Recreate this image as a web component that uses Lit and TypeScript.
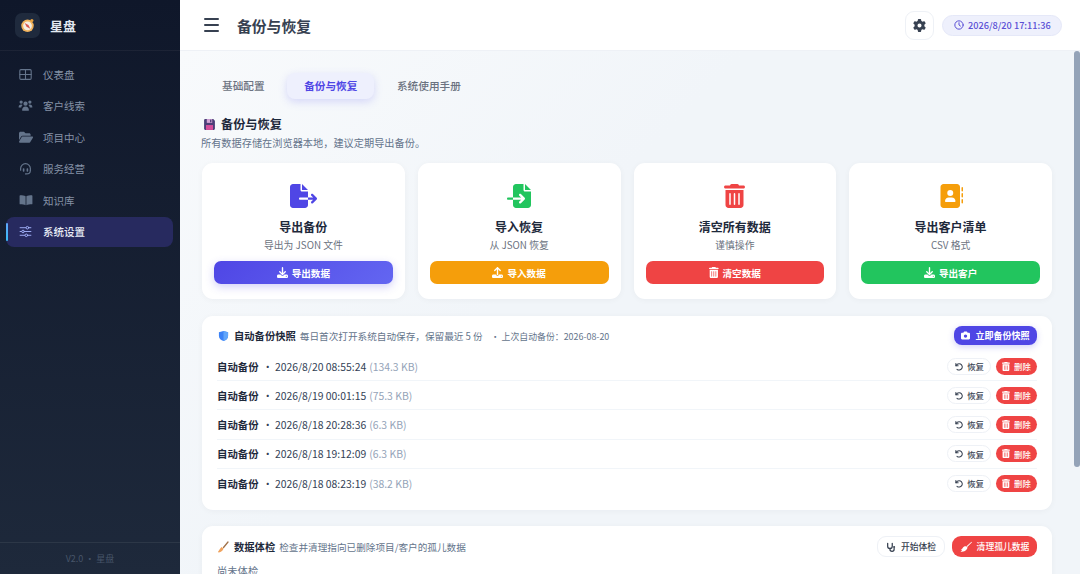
import { LitElement, html, css, svg } from "lit";
import { customElement } from "lit/decorators.js";

const P = {
  fileExport: [576, "M0 64C0 28.7 28.7 0 64 0H224V128c0 17.7 14.3 32 32 32H384V288H216c-13.3 0-24 10.7-24 24s10.7 24 24 24H384V448c0 35.3-28.7 64-64 64H64c-35.3 0-64-28.7-64-64V64zM384 336V288H494.1l-39-39c-9.4-9.4-9.4-24.6 0-33.9s24.6-9.4 33.9 0l80 80c9.4 9.4 9.4 24.6 0 33.9l-80 80c-9.4 9.4-24.6 9.4-33.9 0s-9.4-24.6 0-33.9l39-39H384zm0-208H256V0L384 128z"],
  fileImport: [512, "M128 64c0-35.3 28.7-64 64-64H352V128c0 17.7 14.3 32 32 32H512V448c0 35.3-28.7 64-64 64H192c-35.3 0-64-28.7-64-64V336H302.1l-39 39c-9.4 9.4-9.4 24.6 0 33.9s24.6 9.4 33.9 0l80-80c9.4-9.4 9.4-24.6 0-33.9l-80-80c-9.4-9.4-24.6-9.4-33.9 0s-9.4 24.6 0 33.9l39 39H128V64zm0 224v48H24c-13.3 0-24-10.7-24-24s10.7-24 24-24H128zM512 128H384V0L512 128z"],
  trash: [448, "M135.2 17.7C140.6 6.8 151.7 0 163.8 0H284.2c12.1 0 23.2 6.8 28.6 17.7L320 32h96c17.7 0 32 14.3 32 32s-14.3 32-32 32H32C14.3 96 0 81.7 0 64S14.3 32 32 32h96l7.2-14.3zM32 128H416V448c0 35.3-28.7 64-64 64H96c-35.3 0-64-28.7-64-64V128zm96 64c-8.8 0-16 7.2-16 16V432c0 8.8 7.2 16 16 16s16-7.2 16-16V208c0-8.8-7.2-16-16-16zm96 0c-8.8 0-16 7.2-16 16V432c0 8.8 7.2 16 16 16s16-7.2 16-16V208c0-8.8-7.2-16-16-16zm96 0c-8.8 0-16 7.2-16 16V432c0 8.8 7.2 16 16 16s16-7.2 16-16V208c0-8.8-7.2-16-16-16z"],
  book: [512, "M96 0C60.7 0 32 28.7 32 64V448c0 35.3 28.7 64 64 64H384c35.3 0 64-28.7 64-64V64c0-35.3-28.7-64-64-64H96zM208 288h64c44.2 0 80 35.8 80 80c0 8.8-7.2 16-16 16H144c-8.8 0-16-7.2-16-16c0-44.2 35.8-80 80-80zm-32-96a64 64 0 1 1 128 0 64 64 0 1 1 -128 0zM512 80c0-8.8-7.2-16-16-16s-16 7.2-16 16v64c0 8.8 7.2 16 16 16s16-7.2 16-16V80zM496 192c-8.8 0-16 7.2-16 16v64c0 8.8 7.2 16 16 16s16-7.2 16-16V208c0-8.8-7.2-16-16-16zm16 144c0-8.8-7.2-16-16-16s-16 7.2-16 16v64c0 8.8 7.2 16 16 16s16-7.2 16-16V336z"],
  download: [512, "M288 32c0-17.7-14.3-32-32-32s-32 14.3-32 32V274.7l-73.4-73.4c-12.5-12.5-32.8-12.5-45.3 0s-12.5 32.8 0 45.3l128 128c12.5 12.5 32.8 12.5 45.3 0l128-128c12.5-12.5 12.5-32.8 0-45.3s-32.8-12.5-45.3 0L288 274.7V32zM64 352c-35.3 0-64 28.7-64 64v32c0 35.3 28.7 64 64 64H448c35.3 0 64-28.7 64-64V416c0-35.3-28.7-64-64-64H346.5l-45.3 45.3c-25 25-65.5 25-90.5 0L165.5 352H64zm368 56a24 24 0 1 1 0 48 24 24 0 1 1 0-48z"],
  upload: [512, "M288 109.3V352c0 17.7-14.3 32-32 32s-32-14.3-32-32V109.3l-73.4 73.4c-12.5 12.5-32.8 12.5-45.3 0s-12.5-32.8 0-45.3l128-128c12.5-12.5 32.8-12.5 45.3 0l128 128c12.5 12.5 12.5 32.8 0 45.3s-32.8 12.5-45.3 0L288 109.3zM64 352H192c0 35.3 28.7 64 64 64s64-28.7 64-64H448c35.3 0 64 28.7 64 64v32c0 35.3-28.7 64-64 64H64c-35.3 0-64-28.7-64-64V416c0-35.3 28.7-64 64-64zM432 456a24 24 0 1 0 0-48 24 24 0 1 0 0 48z"],
  gear: [512, "M495.9 166.6c3.2 8.7 .5 18.4-6.4 24.6l-43.3 39.4c1.1 8.3 1.7 16.8 1.7 25.4s-.6 17.1-1.7 25.4l43.3 39.4c6.9 6.2 9.6 15.9 6.4 24.6c-4.4 11.9-9.7 23.3-15.8 34.3l-4.7 8.1c-6.6 11-14 21.4-22.1 31.2c-5.9 7.2-15.7 9.6-24.5 6.8l-55.7-17.7c-13.4 10.3-28.2 18.9-44 25.4l-12.5 57.1c-2 9.1-9 16.3-18.2 17.8c-13.8 2.3-28 3.5-42.5 3.5s-28.7-1.2-42.5-3.5c-9.2-1.5-16.2-8.7-18.2-17.8l-12.5-57.1c-15.8-6.5-30.6-15.1-44-25.4L83.1 425.9c-8.8 2.8-18.6 .3-24.5-6.8c-8.1-9.8-15.5-20.2-22.1-31.2l-4.7-8.1c-6.1-11-11.4-22.4-15.8-34.3c-3.2-8.7-.5-18.4 6.4-24.6l43.3-39.4C64.6 273.1 64 264.6 64 256s.6-17.1 1.7-25.4L22.4 191.2c-6.9-6.2-9.6-15.9-6.4-24.6c4.4-11.9 9.7-23.3 15.8-34.3l4.7-8.1c6.6-11 14-21.4 22.1-31.2c5.9-7.2 15.7-9.6 24.5-6.8l55.7 17.7c13.4-10.3 28.2-18.9 44-25.4l12.5-57.1c2-9.1 9-16.3 18.2-17.8C227.3 1.2 241.5 0 256 0s28.7 1.2 42.5 3.5c9.2 1.5 16.2 8.7 18.2 17.8l12.5 57.1c15.8 6.5 30.6 15.1 44 25.4l55.7-17.7c8.8-2.8 18.6-.3 24.5 6.8c8.1 9.8 15.5 20.2 22.1 31.2l4.7 8.1c6.1 11 11.4 22.4 15.8 34.3zM256 336a80 80 0 1 0 0-160 80 80 0 1 0 0 160z"],
  camera: [512, "M149.1 64.8L138.7 96H64C28.7 96 0 124.7 0 160V416c0 35.3 28.7 64 64 64H448c35.3 0 64-28.7 64-64V160c0-35.3-28.7-64-64-64H373.3L362.9 64.8C356.4 45.2 338.1 32 317.4 32H194.6c-20.7 0-39 13.2-45.5 32.8zM256 192a96 96 0 1 1 0 192 96 96 0 1 1 0-192z"],
} as const;

const fa = (k: keyof typeof P, size: number) => {
  const [w, d] = P[k];
  return html`<svg class="fa" viewBox="0 0 ${w} 512" height=${size} width=${(size * w) / 512} fill="currentColor"><path d=${d}></path></svg>`;
};

const line = (size: number, body: unknown, vb = 24) =>
  html`<svg viewBox="0 0 ${vb} ${vb}" width=${size} height=${size} fill="none" stroke="currentColor" stroke-linecap="round" stroke-linejoin="round">${body}</svg>`;

const navIcons: Record<string, unknown> = {
  grid: line(13, svg`<rect x="1.500" y="3" width="21" height="18" rx="2" stroke-width="2"/><path d="M12 3v18M1.500 12h21" stroke-width="2"/>`),
  users: html`<svg viewBox="0 0 24 24" width="15" height="15" fill="currentColor"><circle cx="5" cy="6.500" r="2.600"/><circle cx="19" cy="6.500" r="2.600"/><circle cx="12" cy="9" r="3.400"/><path d="M1 15c0-3 1.600-4.500 4-4.500 1 0 1.800.3 2.400.8-1.300 1-2 2.300-2.200 3.700H1.800a.8.8 0 0 1-.8 0zM23 15c0-3-1.600-4.500-4-4.500-1 0-1.800.3-2.400.8 1.300 1 2 2.300 2.200 3.700h3.400a.8.800 0 0 0 .8 0zM6.500 19.500c0-3.500 2.300-6 5.500-6s5.500 2.500 5.500 6c0 .5-.4.800-.8.800H7.300c-.4 0-.8-.3-.8-.8z"/></svg>`,
  folder: html`<svg viewBox="0 0 576 512" width="14" height="12.500" fill="currentColor"><path d="M88.700 223.800L0 375.800V96C0 60.700 28.700 32 64 32H181.500c17 0 33.300 6.700 45.300 18.700l26.500 26.500c12 12 28.300 18.700 45.300 18.700H416c35.300 0 64 28.700 64 64v32H144c-22.800 0-43.800 12.100-55.300 31.800zm27.600 16.100C122.100 230 132.600 224 144 224H544c11.500 0 22 6.100 27.700 16.100s5.700 22.200-.1 32.100l-112 192C453.900 474 443.400 480 432 480H32c-11.500 0-22-6.100-27.700-16.100s-5.700-22.200 .1-32.100l112-192z"/></svg>`,
  headset: line(13, svg`<path d="M3 15v-3a9 9 0 0 1 18 0v3" stroke-width="2.200"/><rect x="7" y="11.500" width="3" height="6.500" rx="1.200" fill="currentColor" stroke="none"/><rect x="14" y="11.500" width="3" height="6.500" rx="1.200" fill="currentColor" stroke="none"/><path d="M21 15c0 4-2.500 7-7 7h-2" stroke-width="2.200"/>`),
  book: html`<svg viewBox="0 0 24 24" width="14" height="14" fill="currentColor"><path d="M1 5c0-.6.4-1 1-1 4 0 7 .4 9.300 1.500V21c-2.300-1.100-5.300-1.600-9.300-1.600-.6 0-1-.4-1-1zM23 5c0-.6-.4-1-1-1-4 0-7 .4-9.300 1.500V21c2.300-1.100 5.300-1.600 9.300-1.600.6 0 1-.4 1-1z"/></svg>`,
  sliders: line(13, svg`<path d="M2 5h20M2 12h20M2 19h20" stroke-width="1.700"/><circle cx="15.500" cy="5" r="2.400" fill="#272a5f" stroke-width="1.700"/><circle cx="7.500" cy="12" r="2.400" fill="#272a5f" stroke-width="1.700"/><circle cx="13.500" cy="19" r="2.400" fill="#272a5f" stroke-width="1.700"/>`),
};

const undo = line(9, svg`<path d="M5 4v6h6" stroke-width="2.800"/><path d="M5.500 10A8.500 8.500 0 1 1 8 19.500" stroke-width="2.800"/>`);
const clock = line(10, svg`<circle cx="12" cy="12" r="10" stroke-width="2.400"/><path d="M12 6.500V12l3.500 2.500" stroke-width="2.400"/>`);
const stetho = line(10, svg`<path d="M4 3v7a5.500 5.500 0 0 0 11 0V3" stroke-width="3"/><path d="M9.500 16v1.500a5 5 0 0 0 10 0V15" stroke-width="3"/><circle cx="19.500" cy="12" r="2.500" fill="currentColor" stroke="none"/>`);
const broomWhite = html`<svg viewBox="0 0 24 24" width="12" height="12" fill="currentColor"><path d="M23 1.500l1 1-9.500 9.500-1.500-1.500z"/><path d="M12.500 10.500l2.500 2.500c-.5 2.500-2 5-4.500 6.500-2 1.200-5.500 2-9.500 2 1.500-1 3-2.500 3.500-4-1 .5-2 .5-3 .3 2-1 3.500-3 4.500-4.800 1.500-2 4-3 6.500-2.500z"/></svg>`;

const cards = [
  { icon: "fileExport", ic: "#4f46e5", t: "导出备份", s: "导出为 JSON 文件", b: "导出数据", bi: "download", cls: "indigo" },
  { icon: "fileImport", ic: "#22c55e", t: "导入恢复", s: "从 JSON 恢复", b: "导入数据", bi: "upload", cls: "amber" },
  { icon: "trash", ic: "#ef4444", t: "清空所有数据", s: "谨慎操作", b: "清空数据", bi: "trash", cls: "red" },
  { icon: "book", ic: "#f59e0b", t: "导出客户清单", s: "CSV 格式", b: "导出客户", bi: "download", cls: "green" },
] as const;

const nav = [
  ["grid", "仪表盘"],
  ["users", "客户线索"],
  ["folder", "项目中心"],
  ["headset", "服务经营"],
  ["book", "知识库"],
  ["sliders", "系统设置"],
];

const rows = [
  ["2026/8/20 08:55:24", "(134.3 KB)"],
  ["2026/8/19 00:01:15", "(75.3 KB)"],
  ["2026/8/18 20:28:36", "(6.3 KB)"],
  ["2026/8/18 19:12:09", "(6.3 KB)"],
  ["2026/8/18 08:23:19", "(38.2 KB)"],
];

@customElement("app-root")
export class AppRoot extends LitElement {
  static styles = css`
    :host {
      display: flex;
      width: 1080px;
      height: 574px;
      overflow: hidden;
      font-family: "Noto Sans CJK SC", "Noto Sans", sans-serif;
      color: #1e293b;
      background: #f1f5f9;
    }
    svg { display: block; flex: none; }
    .side {
      width: 180px;
      flex: none;
      display: flex;
      flex-direction: column;
      background: linear-gradient(180deg, #0f172a 0%, #1e293b 100%);
    }
    .brand {
      height: 50px;
      flex: none;
      display: flex;
      align-items: center;
      gap: 10px;
      padding-left: 15px;
      border-bottom: 1px solid rgba(255, 255, 255, 0.05);
    }
    .logo {
      width: 25px;
      height: 25px;
      border-radius: 7px;
      background: #1f2a3d;
      display: flex;
      align-items: center;
      justify-content: center;
    }
    .brand b { font-size: 13px; font-weight: 600; color: #e2e8f0; }
    .nav { flex: 1; padding: 8px 7px 0 6px; display: flex; flex-direction: column; gap: 1.6px; }
    .item {
      position: relative;
      height: 30px;
      display: flex;
      align-items: center;
      border-radius: 8px;
      font-size: 10.5px;
      color: #8592a6;
    }
    .ni { width: 15px; margin: 0 10px 0 12px; display: flex; justify-content: center; color: #64748b; }
    .item.on { background: #272a5f; color: #e8ecf6; font-weight: 500; }
    .item.on .ni { color: #a5b4fc; }
    .item.on::before {
      content: "";
      position: absolute;
      left: 0;
      top: 6px;
      bottom: 6px;
      width: 2px;
      border-radius: 2px;
      background: linear-gradient(180deg, #60a5fa, #38bdf8);
    }
    .foot {
      height: 31px;
      border-top: 1px solid rgba(255, 255, 255, 0.07);
      display: flex;
      align-items: center;
      justify-content: center;
      font-size: 9px;
      color: #475569;
    }
    .right { flex: 1; min-width: 0; display: flex; flex-direction: column; }
    .top {
      height: 50px;
      flex: none;
      background: #fff;
      border-bottom: 1px solid #eef1f6;
      display: flex;
      align-items: center;
      padding: 0 18px 0 24px;
    }
    .bars { width: 15px; height: 14px; display: flex; flex-direction: column; justify-content: space-between; margin-right: 18px; }
    .bars i { display: block; height: 2.2px; border-radius: 1px; background: #374151; }
    .top h1 { margin: 0; font-size: 14.8px; font-weight: 600; color: #374151; flex: 1; }
    .gear {
      width: 29px;
      height: 29px;
      box-sizing: border-box;
      border: 1px solid #eef1f6;
      border-radius: 9px;
      display: flex;
      align-items: center;
      justify-content: center;
      color: #374151;
      margin-right: 8px;
    }
    .time {
      height: 21px;
      width: 120px;
      box-sizing: border-box;
      border: 1px solid #e5e8f8;
      border-radius: 11px;
      background: #eef0fc;
      color: #5b50d6;
      font-size: 9.2px;
      font-weight: 500;
      display: flex;
      align-items: center;
      gap: 4px;
      padding-left: 11px;
    }
    .body { flex: 1; min-height: 0; display: flex; background: #f1f5f9; }
    .scroll { flex: 1; min-width: 0; overflow: hidden; background: linear-gradient(135deg, #f8fafc, #f1f5f9 40%); }
    .track { width: 6px; flex: none; }
    .thumb { height: 416px; background: #94a3b8; border-radius: 3px; }
    .inner { box-sizing: border-box; height: 660px; padding: 22px 22px 0 22px; }
    .tabs { display: flex; gap: 5.500px; padding-left: 3px; height: 26px; }
    .tab {
      padding: 0 17px 1px;
      display: flex;
      align-items: center;
      border-radius: 8px;
      font-size: 10.67px;
      font-weight: 500;
      color: #6b7280;
    }
    .tab.on { background: #eef0fd; color: #4f46e5; font-weight: 600; box-shadow: 0 3px 8px rgba(99, 102, 241, 0.22); }
    .sect { margin-top: 16px; display: flex; align-items: center; gap: 5px; height: 18px; font-size: 12.2px; font-weight: 700; color: #1e293b; }
    .desc { margin-top: 2px; font-size: 10.2px; line-height: 16px; color: #64748b; margin-left: -1px; }
    .cards { margin-top: 12px; display: grid; grid-template-columns: repeat(4, 1fr); gap: 13px; }
    .card {
      background: #fff;
      border-radius: 11px;
      box-shadow: 0 1px 6px rgba(15, 23, 42, 0.04);
      padding: 21px 12px 15px;
      display: flex;
      flex-direction: column;
      align-items: center;
      height: 136px;
      box-sizing: border-box;
    }
    .card .ic { height: 24px; display: flex; align-items: center; }
    .card h3 { margin: 10px 0 0; font-size: 12px; line-height: 18px; font-weight: 700; color: #1e293b; }
    .card p { margin: 2px 0 0; font-size: 9.800px; line-height: 15px; color: #6b7280; }
    .btn {
      margin-top: 8px;
      width: 100%;
      height: 23px;
      border-radius: 7px;
      display: flex;
      align-items: center;
      justify-content: center;
      gap: 4px;
      color: #fff;
      font-size: 9.6px;
      font-weight: 600;
    }
    .indigo { background: linear-gradient(135deg, #4f46e5, #6366f1); box-shadow: 0 3px 8px rgba(79, 70, 229, 0.25); }
    .amber { background: #f59e0b; }
    .red { background: #ef4444; }
    .green { background: #22c55e; }
    .panel {
      background: #fff;
      border-radius: 11px;
      box-shadow: 0 1px 6px rgba(15, 23, 42, 0.04);
      padding: 10px 15px;
    }
    .snap { margin-top: 17px; height: 194px; box-sizing: border-box; }
    .check { margin-top: 16px; padding-top: 11px; }
    .phead { display: flex; align-items: center; height: 19px; }
    .phead .t { display: flex; align-items: baseline; flex: 1; min-width: 0; white-space: nowrap; }
    .shield { align-self: center; margin: 0 5px 0 1px; }
    .brush { align-self: center; margin: 0 5px 0 0; }
    .floppy { margin-left: 1px; }
    .phead b { font-size: 10.3px; font-weight: 700; color: #1e293b; margin-right: 4px; }
    .phead .d { font-size: 9.65px; color: #64748b; }
    .phead .l { font-size: 8.9px; color: #64748b; margin-left: 8px; }
    .snapbtn {
      width: 83px;
      height: 19px;
      border-radius: 8px;
      background: #4f46e5;
      box-shadow: 0 2px 6px rgba(79, 70, 229, 0.25);
      color: #fff;
      font-size: 9px;
      font-weight: 600;
      display: flex;
      align-items: center;
      justify-content: center;
      gap: 5px;
    }
    .rows { margin-top: 7px; }
    .row {
      height: 29.2px;
      box-sizing: border-box;
      display: flex;
      align-items: center;
      border-bottom: 1px solid #f1f5f9;
      font-size: 10.4px;
      color: #334155;
    }
    .row:last-child { border-bottom: 0; }
    .row b { font-weight: 700; color: #1e293b; margin-right: 4px; }
    .row .sep { margin-right: 2px; }
    .row .sz { color: #94a3b8; margin-left: 3px; }
    .row .sp { flex: 1; }
    .ghost, .del {
      height: 17px;
      border-radius: 9px;
      display: flex;
      align-items: center;
      justify-content: center;
      gap: 4px;
      font-size: 8.4px;
      font-weight: 500;
      box-sizing: border-box;
    }
    .ghost { width: 44px; background: #fff; border: 1px solid #eef1f6; color: #374151; }
    .del { width: 41px; background: #ef4444; color: #fff; margin-left: 5px; }
    .checkbtns { display: flex; gap: 7px; }
    .b2 { height: 21px; border-radius: 9px; display: flex; align-items: center; justify-content: center; gap: 5px; font-size: 8.8px; font-weight: 500; box-sizing: border-box; }
    .b2.g { width: 68px; background: #fff; border: 1px solid #eef1f6; color: #374151; }
    .b2.r { width: 85px; background: #ef4444; color: #fff; }
    .none { margin-top: 7px; font-size: 10.3px; color: #64748b; }
  `;

  render() {
    return html`
      <aside class="side">
        <div class="brand">
          <div class="logo">
            <svg viewBox="0 0 24 24" width="15" height="15">
              <circle cx="12" cy="12.500" r="10" fill="#f2b35c"/>
              <circle cx="12" cy="12.500" r="7" fill="#f6efe2"/>
              <path d="M7.500 8l6 3 3 6-6-3z" fill="#d9574f"/>
              <circle cx="19" cy="4" r="2.500" fill="#e9a23f"/>
            </svg>
          </div>
          <b>星盘</b>
        </div>
        <nav class="nav">
          ${nav.map(
            ([i, t]) => html`<div class="item ${t === "系统设置" ? "on" : ""}"><span class="ni">${navIcons[i]}</span>${t}</div>`
          )}
        </nav>
        <div class="foot">V2.0 · 星盘</div>
      </aside>
      <div class="right">
        <header class="top">
          <div class="bars"><i></i><i></i><i></i></div>
          <h1>备份与恢复</h1>
          <div class="gear">${fa("gear", 13)}</div>
          <div class="time">${clock}<span>2026/8/20 17:11:36</span></div>
        </header>
        <div class="body">
          <div class="scroll">
            <div class="inner">
              <div class="tabs">
                <div class="tab">基础配置</div>
                <div class="tab on">备份与恢复</div>
                <div class="tab">系统使用手册</div>
              </div>
              <div class="sect">
                <svg class="floppy" viewBox="0 0 24 24" width="13" height="13">
                  <path d="M2 4a2 2 0 0 1 2-2h15l3 3v15a2 2 0 0 1-2 2H4a2 2 0 0 1-2-2z" fill="#4c3f78"/>
                  <rect x="7" y="2" width="10" height="7" fill="#d6a6d8"/>
                  <rect x="13" y="3" width="2.500" height="5" fill="#4c3f78"/>
                  <rect x="5.500" y="13" width="13" height="9" fill="#d64f9c"/>
                </svg>
                备份与恢复
              </div>
              <div class="desc">所有数据存储在浏览器本地，建议定期导出备份。</div>
              <div class="cards">
                ${cards.map(
                  (c) => html`<div class="card">
                    <div class="ic" style="color:${c.ic}">${fa(c.icon, 24)}</div>
                    <h3>${c.t}</h3>
                    <p>${c.s}</p>
                    <div class="btn ${c.cls}">${fa(c.bi, 11)}<span>${c.b}</span></div>
                  </div>`
                )}
              </div>
              <section class="panel snap">
                <div class="phead">
                  <div class="t">
                    <svg class="shield" viewBox="0 0 24 24" width="11" height="12">
                      <path d="M12 1l10 3v8c0 6-4.500 9.500-10 11C6.500 21.500 2 18 2 12V4z" fill="#3b82f6"/>
                      <path d="M12 1l10 3v8c0 6-4.500 9.500-10 11z" fill="#60a5fa"/>
                    </svg>
                    <b>自动备份快照</b>
                    <span class="d">每日首次打开系统自动保存，保留最近 5 份</span>
                    <span class="l">· 上次自动备份：2026-08-20</span>
                  </div>
                  <div class="snapbtn">${fa("camera", 9)}<span>立即备份快照</span></div>
                </div>
                <div class="rows">
                  ${rows.map(
                    (r) => html`<div class="row">
                      <b>自动备份</b><span class="sep">·</span><span>${r[0]}</span><span class="sz">${r[1]}</span>
                      <span class="sp"></span>
                      <div class="ghost">${undo}<span>恢复</span></div>
                      <div class="del">${fa("trash", 9)}<span>删除</span></div>
                    </div>`
                  )}
                </div>
              </section>
              <section class="panel check">
                <div class="phead">
                  <div class="t">
                    <svg class="brush" viewBox="0 0 24 24" width="12" height="12">
                      <path d="M22 2L13 13" stroke="#a0714a" stroke-width="2.600" stroke-linecap="round"/>
                      <path d="M9 12l4 3c-.5 3-3 6-9 8-1 0-2-.5-2-1.500C4 19 6 15 9 12z" fill="#f0a35e"/>
                    </svg>
                    <b>数据体检</b>
                    <span class="d">检查并清理指向已删除项目/客户的孤儿数据</span>
                  </div>
                  <div class="checkbtns">
                    <div class="b2 g">${stetho}<span>开始体检</span></div>
                    <div class="b2 r">${broomWhite}<span>清理孤儿数据</span></div>
                  </div>
                </div>
                <div class="none">尚未体检</div>
              </section>
            </div>
          </div>
          <div class="track"><div class="thumb"></div></div>
        </div>
      </div>
    `;
  }
}
